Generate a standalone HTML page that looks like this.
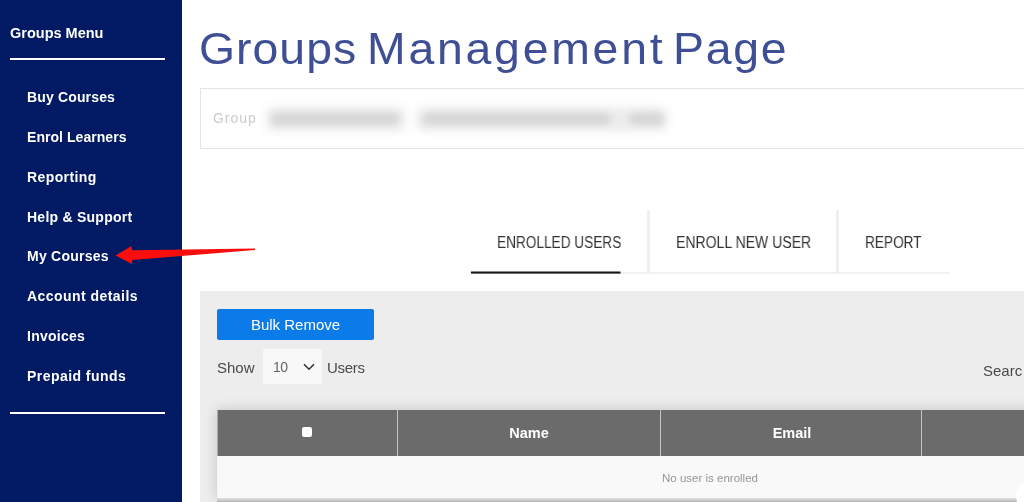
<!DOCTYPE html>
<html><head><meta charset="utf-8">
<style>
*{margin:0;padding:0;box-sizing:border-box}
html,body{width:1024px;height:502px;overflow:hidden;background:#fff;font-family:"Liberation Sans",sans-serif}
.abs{position:absolute}
.t15,.mi,#gm,#glabel,#btn,.th,.nu,.tab,.tw{will-change:transform}
#side{left:0;top:0;width:182px;height:502px;background:#011a63}
.sl{left:10px;width:155px;height:2px;background:#fff}
.mi{left:27px;color:#fff;font-weight:bold;font-size:14px;line-height:16px;white-space:nowrap;letter-spacing:.25px}
#gm{left:10px;top:25px;color:#fff;font-weight:bold;font-size:14.5px;line-height:16px;white-space:nowrap}
.tw{top:25px;font-size:45px;line-height:48px;color:#3f4f96;white-space:nowrap;transform-origin:0 0;transform:scaleX(1.03)}
#gbox{left:200px;top:88px;width:840px;height:61px;border:1px solid #e4e4e4;background:#fff}
#glabel{left:213px;top:110px;font-size:14px;line-height:16px;color:#cbcbcb;letter-spacing:.95px}
.blur{height:12px;top:113px;background:#bcbcbc;filter:blur(3.6px);border-radius:6px;opacity:.45}
.halo{height:24px;top:107px;background:#ececec;filter:blur(4.5px);border-radius:8px}
.tab{top:233.5px;font-size:16px;line-height:18px;color:#333;white-space:nowrap;transform-origin:0 0;transform:scaleX(.852)}
#panel{left:200px;top:291px;width:824px;height:211px;background:#ededed}
#btn{left:217px;top:309px;width:157px;height:31px;background:#0a7be9;border-radius:2px;color:#fff;font-size:15px;line-height:31px;text-align:center}
.t15{font-size:15px;line-height:17px;color:#4a4a4a;white-space:nowrap}
#sel{left:263px;top:349px;width:59px;height:35px;background:#f8f8f8;border-radius:2px}
#thead{transform:translateX(.5px);left:217px;top:410px;width:807px;height:46px;background:#6b6b6b}
.vs{top:410px;width:1px;height:46px;background:#c4c4c4}
.th{top:425px;color:#fff;font-weight:bold;font-size:14.5px;line-height:17px;white-space:nowrap;transform:translateX(-50%)}
#row{transform:translateX(.5px);left:217px;top:456px;width:807px;height:42px;background:#f9f9f9}
</style></head><body>
<div id="side" class="abs"></div>
<div id="gm" class="abs">Groups Menu</div>
<div class="abs sl" style="top:58px"></div>
<div class="abs mi" style="top:89px;letter-spacing:.15px">Buy Courses</div>
<div class="abs mi" style="top:129px;letter-spacing:.05px">Enrol Learners</div>
<div class="abs mi" style="top:169px;letter-spacing:.4px">Reporting</div>
<div class="abs mi" style="top:209px">Help &amp; Support</div>
<div class="abs mi" style="top:248px">My Courses</div>
<div class="abs mi" style="top:288px;letter-spacing:.45px">Account details</div>
<div class="abs mi" style="top:328px">Invoices</div>
<div class="abs mi" style="top:368px;letter-spacing:.45px">Prepaid funds</div>
<div class="abs sl" style="top:412px"></div>

<div id="w1" class="abs tw" style="left:199px;letter-spacing:1.0px">Groups</div>
<div id="w2" class="abs tw" style="left:367px;letter-spacing:2.7px">Management</div>
<div id="w3" class="abs tw" style="left:673px;letter-spacing:1.7px">Page</div>
<div id="gbox" class="abs"></div>
<div id="glabel" class="abs">Group</div>
<div class="abs halo" style="left:266px;width:140px"></div><div class="abs halo" style="left:416px;width:252px"></div>
<div class="abs blur" style="left:271px;width:128px"></div>
<div class="abs blur" style="left:423px;width:188px"></div>
<div class="abs blur" style="left:629px;width:35px"></div>


<div class="abs" style="left:647px;top:210px;width:3px;height:63px;background:#efefef"></div>
<div class="abs" style="left:836px;top:210px;width:3px;height:63px;background:#efefef"></div>
<div class="abs tab" style="left:496.5px">ENROLLED USERS</div>
<div class="abs tab" style="left:675.5px;transform:scaleX(.877)">ENROLL NEW USER</div>
<div class="abs tab" style="left:864.7px">REPORT</div>

<svg class="abs" style="left:0;top:0" width="1024" height="502" viewBox="0 0 1024 502">
<rect x="471" y="272.4" width="478.4" height="1.2" fill="#e9e9e9"/><rect x="470.9" y="271.5" width="149.6" height="2.1" fill="#161616"/>
<polygon points="115.6,255.6 131.3,245.9 132.3,250.3 255,248.6 255,250 132.3,260 131.9,263.9" fill="#fa0d0d"/>
</svg>

<div id="panel" class="abs"></div>
<div id="btn" class="abs">Bulk Remove</div>
<div class="abs t15" style="left:217px;top:358.5px">Show</div>
<div id="sel" class="abs"></div>
<div class="abs t15" style="left:273px;top:359px;color:#666;font-size:14px;letter-spacing:-.6px">10</div>
<svg class="abs" style="left:302px;top:362px" width="14" height="10" viewBox="0 0 14 10"><path d="M2 2.2 L7 7.2 L12 2.2" fill="none" stroke="#333" stroke-width="1.6"/></svg>
<div class="abs t15" style="left:327px;top:358.5px;letter-spacing:-.3px">Users</div>
<div class="abs t15" style="left:983px;top:362px;letter-spacing:0">Searc</div>

<div class="abs" style="left:217px;top:410px;width:820px;height:88px;box-shadow:0 0 12px rgba(0,0,0,.18)"></div>
<div id="thead" class="abs"></div>
<div class="abs vs" style="left:397px"></div>
<div class="abs vs" style="left:660px"></div>
<div class="abs vs" style="left:921px"></div>
<div class="abs" style="left:302px;top:427px;width:10px;height:10px;background:#fff;border-radius:2px"></div>
<div class="abs th" style="left:529px">Name</div>
<div class="abs th" style="left:791.5px">Email</div>
<div id="row" class="abs"></div>
<div class="abs nu" style="left:710px;top:471.6px;font-size:11.5px;line-height:13px;color:#969696;white-space:nowrap;transform:translateX(-50%)">No user is enrolled</div>
<div class="abs" style="left:217px;top:498px;width:807px;height:4px;background:linear-gradient(#e2e2e2,#b6b6b6)"></div>
<div class="abs" style="left:1016px;top:480px;width:32px;height:32px;border-radius:50%;background:#fff"></div>
</body></html>
